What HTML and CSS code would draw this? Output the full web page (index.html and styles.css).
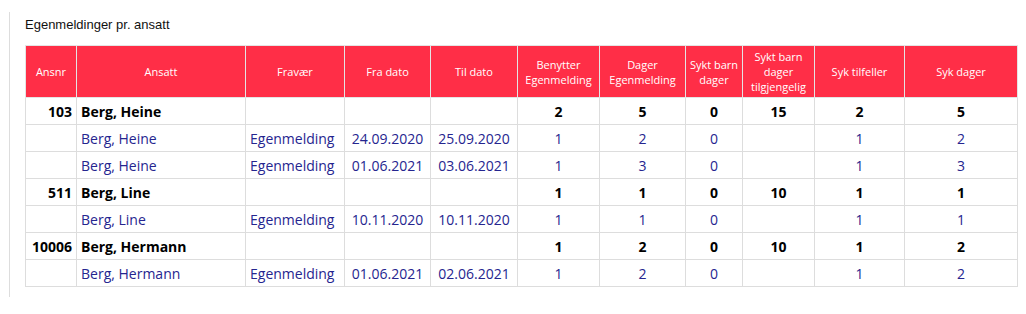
FILE: index.html
```html
<!DOCTYPE html>
<html lang="no">
<head>
<meta charset="utf-8">
<title>Egenmeldinger pr. ansatt</title>
<link rel="stylesheet" href="styles.css">
</head>
<body>
<div class="panel">
  <div class="title">Egenmeldinger pr. ansatt</div>
  <table class="report">
    <colgroup>
      <col class="c-nr"><col class="c-name"><col class="c-type"><col class="c-from"><col class="c-to">
      <col class="c-ben"><col class="c-dag"><col class="c-sb"><col class="c-sbt"><col class="c-st"><col class="c-sd">
    </colgroup>
    <thead>
      <tr>
        <th>Ansnr</th><th>Ansatt</th><th>Fravær</th><th>Fra dato</th><th>Til dato</th>
        <th>Benytter Egenmelding</th><th>Dager Egenmelding</th><th>Sykt barn dager</th>
        <th>Sykt barn dager tilgjengelig</th><th>Syk tilfeller</th><th>Syk dager</th>
      </tr>
    </thead>
    <tbody>
      <tr class="sum">
        <td class="nr">103</td><td class="name">Berg, Heine</td><td></td><td></td><td></td>
        <td>2</td><td>5</td><td>0</td><td>15</td><td>2</td><td>5</td>
      </tr>
      <tr class="det">
        <td></td><td class="name">Berg, Heine</td><td class="type">Egenmelding</td><td>24.09.2020</td><td>25.09.2020</td>
        <td>1</td><td>2</td><td>0</td><td></td><td>1</td><td>2</td>
      </tr>
      <tr class="det">
        <td></td><td class="name">Berg, Heine</td><td class="type">Egenmelding</td><td>01.06.2021</td><td>03.06.2021</td>
        <td>1</td><td>3</td><td>0</td><td></td><td>1</td><td>3</td>
      </tr>
      <tr class="sum">
        <td class="nr">511</td><td class="name">Berg, Line</td><td></td><td></td><td></td>
        <td>1</td><td>1</td><td>0</td><td>10</td><td>1</td><td>1</td>
      </tr>
      <tr class="det">
        <td></td><td class="name">Berg, Line</td><td class="type">Egenmelding</td><td>10.11.2020</td><td>10.11.2020</td>
        <td>1</td><td>1</td><td>0</td><td></td><td>1</td><td>1</td>
      </tr>
      <tr class="sum">
        <td class="nr">10006</td><td class="name">Berg, Hermann</td><td></td><td></td><td></td>
        <td>1</td><td>2</td><td>0</td><td>10</td><td>1</td><td>2</td>
      </tr>
      <tr class="det">
        <td></td><td class="name">Berg, Hermann</td><td class="type">Egenmelding</td><td>01.06.2021</td><td>02.06.2021</td>
        <td>1</td><td>2</td><td>0</td><td></td><td>1</td><td>2</td>
      </tr>
    </tbody>
  </table>
</div>
</body>
</html>
```

FILE: styles.css
```css
html, body {
  margin: 0;
  padding: 0;
  background: #ffffff;
}

.panel {
  margin: 12px 0 0 9px;
  padding: 0 0 10px 15px;
  border-left: 1px solid #dddddd;
  width: 993px;
}

.title {
  font-family: "Liberation Sans", Arial, sans-serif;
  font-size: 13px;
  line-height: 18px;
  color: #111111;
  padding-top: 4px;
  margin-bottom: 11px;
}

.report {
  border-collapse: collapse;
  table-layout: fixed;
  width: 993px;
  font-family: "Open Sans", sans-serif;
}

.c-nr { width: 51px; }
.c-name { width: 169px; }
.c-type { width: 99px; }
.c-from { width: 86px; }
.c-to { width: 87px; }
.c-ben { width: 82px; }
.c-dag { width: 86px; }
.c-sb { width: 57px; }
.c-sbt { width: 72px; }
.c-st { width: 90px; }
.c-sd { width: 113px; }

.report th {
  background: #ff2e47;
  color: #ffffff;
  font-weight: normal;
  font-size: 11px;
  line-height: 15px;
  height: 51px;
  padding: 0 2px;
  text-align: center;
  vertical-align: middle;
  border: 1px solid #e4e4e4;
}

.report td {
  height: 26px;
  padding: 0 4px;
  font-size: 14px;
  line-height: 19px;
  text-align: center;
  vertical-align: middle;
  border: 1px solid #dddddd;
  white-space: nowrap;
}

.report td.nr { text-align: right; }
.report td.name,
.report td.type { text-align: left; }

.sum td {
  font-weight: bold;
  color: #000000;
}

.det td {
  color: #25258f;
}
```
